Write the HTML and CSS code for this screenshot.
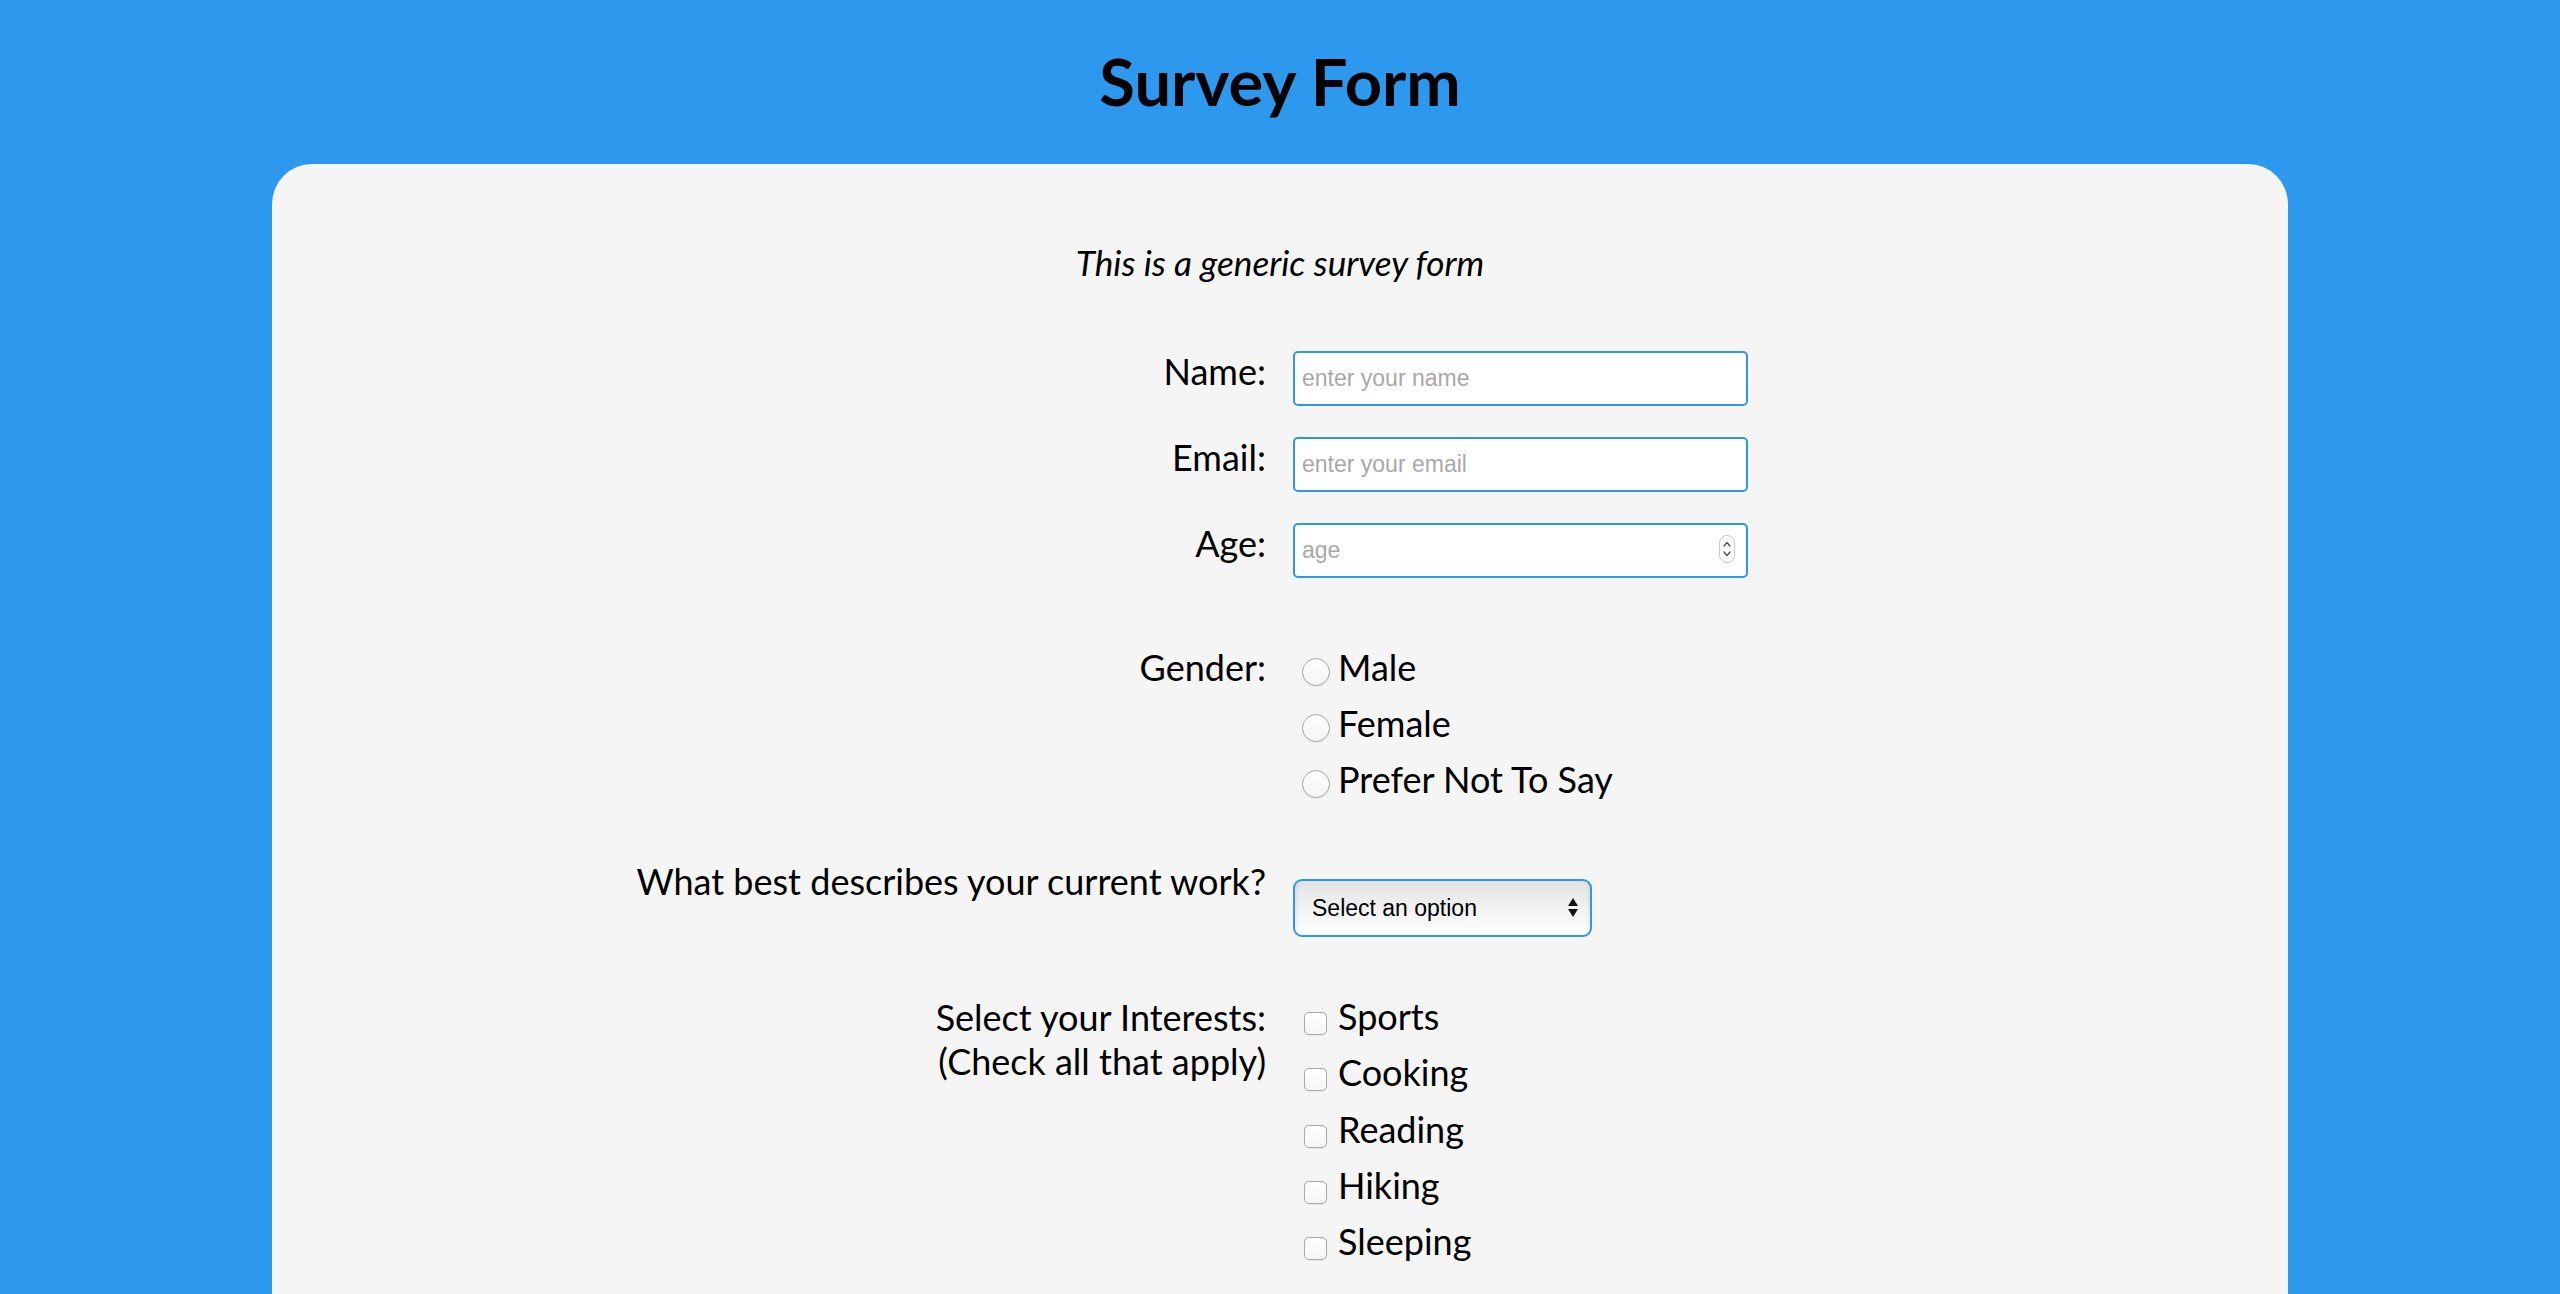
FILE: index.html
```html
<!DOCTYPE html>
<html lang="en">
<head>
<meta charset="utf-8">
<title>Survey Form</title>
<link rel="stylesheet" href="styles.css">
</head>
<body>
<header class="page-header">
  <h1 class="title">Survey Form</h1>
</header>
<main class="card">
  <p class="subtitle">This is a generic survey form</p>
  <form class="form">
    <div class="row row-text">
      <label class="label" for="name">Name:</label>
      <div class="control">
        <input class="text-input" id="name" type="text" placeholder="enter your name">
      </div>
    </div>
    <div class="row row-text">
      <label class="label" for="email">Email:</label>
      <div class="control">
        <input class="text-input" id="email" type="email" placeholder="enter your email">
      </div>
    </div>
    <div class="row row-text">
      <label class="label" for="age">Age:</label>
      <div class="control">
        <div class="number-wrap">
          <input class="text-input number-input" id="age" type="number" placeholder="age">
          <svg class="spinner" width="16" height="28" viewBox="0 0 16 28" aria-hidden="true">
            <rect x="0.5" y="0.5" width="15" height="27" rx="7.5" fill="#fff" stroke="#c9c9c9"/>
            <path d="M5 11 L8 7.5 L11 11" fill="none" stroke="#555" stroke-width="1.4" stroke-linecap="round" stroke-linejoin="round"/>
            <path d="M5 17 L8 20.5 L11 17" fill="none" stroke="#555" stroke-width="1.4" stroke-linecap="round" stroke-linejoin="round"/>
          </svg>
        </div>
      </div>
    </div>
    <div class="row row-gender">
      <div class="label">Gender:</div>
      <div class="control options">
        <label class="option"><input class="radio" type="radio" name="gender" value="male"><span>Male</span></label>
        <label class="option"><input class="radio" type="radio" name="gender" value="female"><span>Female</span></label>
        <label class="option"><input class="radio" type="radio" name="gender" value="none"><span>Prefer Not To Say</span></label>
      </div>
    </div>
    <div class="row row-work">
      <label class="label" for="work">What best describes your current work?</label>
      <div class="control">
        <div class="select-wrap">
          <select class="select" id="work">
            <option>Select an option</option>
            <option>Student</option>
            <option>Full Time</option>
            <option>Part Time</option>
          </select>
          <svg class="select-arrows" width="10" height="19" viewBox="0 0 10 19" aria-hidden="true">
            <polygon points="5,0 10,8 0,8" fill="#111"/>
            <polygon points="0,11 10,11 5,19" fill="#111"/>
          </svg>
        </div>
      </div>
    </div>
    <div class="row row-interests">
      <div class="label label-multi">Select your Interests:<br>(Check all that apply)</div>
      <div class="control options">
        <label class="option option-check"><input class="check" type="checkbox" value="sports"><span>Sports</span></label>
        <label class="option option-check"><input class="check" type="checkbox" value="cooking"><span>Cooking</span></label>
        <label class="option option-check"><input class="check" type="checkbox" value="reading"><span>Reading</span></label>
        <label class="option option-check"><input class="check" type="checkbox" value="hiking"><span>Hiking</span></label>
        <label class="option option-check"><input class="check" type="checkbox" value="sleeping"><span>Sleeping</span></label>
      </div>
    </div>
  </form>
</main>
</body>
</html>
```
FILE: styles.css
```css
html, body {
  margin: 0;
  padding: 0;
}

body {
  background: #2c99ee;
  font-family: Lato, "Open Sans", sans-serif;
  color: #000;
}

.page-header {
  padding: 43px 0 44px;
}

.title {
  margin: 0;
  text-align: center;
  font-size: 65px;
  font-weight: 700;
  line-height: 77px;
}

.card {
  width: 2016px;
  margin: 0 auto;
  background: #f5f5f5;
  border-radius: 40px;
  padding: 74px 0 140px;
  box-sizing: border-box;
}

.subtitle {
  margin: 0;
  text-align: center;
  font-style: italic;
  font-size: 35.2px;
  line-height: 48px;
}

.form {
  display: flex;
  flex-direction: column;
  margin-top: 57px;
}

.row {
  display: grid;
  grid-template-columns: 1fr 1fr;
  column-gap: 28px;
  font-size: 36px;
  line-height: 56px;
}

.label {
  text-align: right;
}

.control {
  min-width: 0;
}

.row-text {
  margin-bottom: 23px;
}

.text-input {
  display: block;
  box-sizing: border-box;
  width: 455px;
  height: 55px;
  margin: 8px 0 0 -1px;
  padding: 0 7px;
  border: 2px solid #2c99ee;
  border-radius: 5px;
  background: #fff;
  font: 23px "Liberation Sans", Arial, sans-serif;
  color: #000;
  outline: none;
}

.text-input::placeholder {
  color: #a9a9a9;
}

.number-wrap {
  position: relative;
  width: 455px;
  margin-top: 8px;
}

.number-wrap .text-input {
  margin-top: 0;
}

.number-input {
  -moz-appearance: textfield;
}

.number-input::-webkit-inner-spin-button,
.number-input::-webkit-outer-spin-button {
  -webkit-appearance: none;
  margin: 0;
}

.spinner {
  position: absolute;
  top: 12px;
  right: 14px;
  pointer-events: none;
}

.row-gender {
  margin-top: 38px;
}

.options {
  display: flex;
  flex-direction: column;
}

.option {
  display: flex;
  align-items: flex-start;
  height: 56px;
  white-space: nowrap;
}

.option-check {
  height: 56.3px;
}

.radio {
  -webkit-appearance: none;
  appearance: none;
  flex: none;
  box-sizing: border-box;
  width: 28px;
  height: 28px;
  margin: 19px 8px 0 8px;
  border: 1px solid #a9a9a9;
  border-radius: 50%;
  background: linear-gradient(#ffffff, #f4f4f4);
  box-shadow: 0 1px 1px rgba(0, 0, 0, 0.08);
}

.check {
  -webkit-appearance: none;
  appearance: none;
  flex: none;
  box-sizing: border-box;
  width: 23px;
  height: 23px;
  margin: 24px 11px 0 10px;
  border: 1px solid #a9a9a9;
  border-radius: 5px;
  background: linear-gradient(#ffffff, #f6f6f6);
  box-shadow: 0 1px 1px rgba(0, 0, 0, 0.06);
}

.row-work {
  margin-top: 46px;
}

.select-wrap {
  position: relative;
  width: 299px;
  margin-top: 26px;
  margin-left: -1px;
}

.select {
  -webkit-appearance: none;
  appearance: none;
  display: block;
  box-sizing: border-box;
  width: 299px;
  height: 58px;
  margin: 0;
  padding: 0 30px 0 17px;
  border: 2px solid #2c99ee;
  border-radius: 9px;
  background: linear-gradient(#e3e3e3, #f3f3f3 55%, #ffffff);
  box-shadow: inset 4px 0 4px -3px rgba(0, 0, 0, 0.08), inset -4px 0 4px -3px rgba(0, 0, 0, 0.08);
  font: 23px "Liberation Sans", Arial, sans-serif;
  color: #000;
  outline: none;
}

.select-arrows {
  position: absolute;
  top: 19px;
  left: 275px;
  pointer-events: none;
}

.row-interests {
  margin-top: 51px;
}

.label-multi {
  line-height: 44px;
  padding-top: 7px;
}
```
